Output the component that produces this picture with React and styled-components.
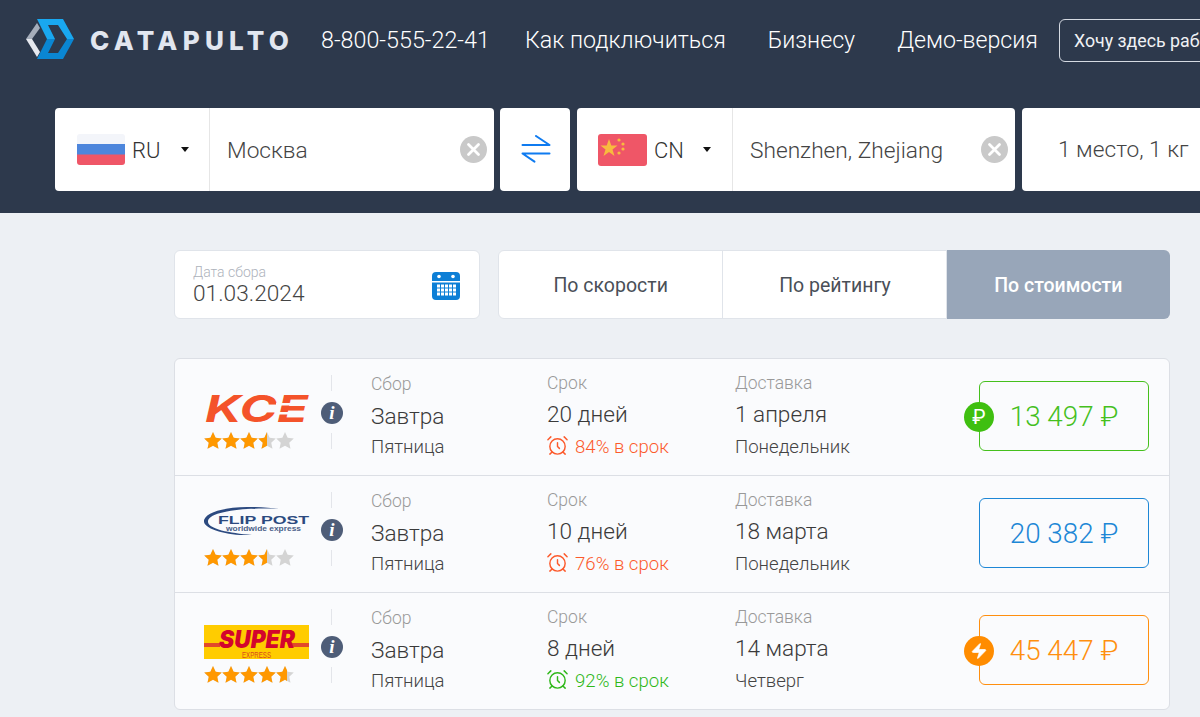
import React from 'react'
import styled, { createGlobalStyle } from 'styled-components'
import { AlarmClock, Zap } from 'lucide-react'

const GlobalStyle = createGlobalStyle`
  html, body {
    margin: 0;
    padding: 0;
    width: 1200px;
    height: 717px;
    overflow: hidden;
    background: #edf0f4;
    font-family: Roboto, "Liberation Sans", sans-serif;
    font-weight: 300;
  }
  * { box-sizing: border-box; }
`

const Page = styled.div`
  width: 1200px;
  height: 717px;
  overflow: hidden;
`
const Header = styled.header`
  height: 213px;
  background: #2d394c;
  padding: 18px 0 0 25px;
`
const TopBar = styled.div`
  display: flex;
  align-items: center;
  height: 44px;
  white-space: nowrap;
`
const Brand = styled.div`
  display: flex;
  align-items: center;
  flex: none;
  gap: 15px;
  width: 296px;
`
const BrandName = styled.span`
  font-family: Inter, sans-serif;
  font-weight: 800;
  font-size: 26px;
  letter-spacing: 5.3px;
  color: #e1e6ef;
`
const Phone = styled.span`
  flex: none;
  font-size: 23.3px;
  color: #fff;
  width: 204px;
`
const NavLink = styled.a`
  flex: none;
  font-size: 23.2px;
  color: #fff;
  margin-right: ${(p) => p.$gap}px;
`
const CtaButton = styled.a`
  display: flex;
  flex: none;
  align-items: center;
  height: 43px;
  padding: 0 14px;
  border: 1px solid #d5dae2;
  border-radius: 6px;
  font-size: 17.8px;
  font-weight: 400;
  color: #f0f2f5;
`
const SearchBar = styled.div`
  display: flex;
  gap: 7px;
  margin: 46px 0 0 30px;
  height: 83px;
`
const Field = styled.div`
  display: flex;
  align-items: center;
  flex: none;
  width: ${(p) => p.$w}px;
  background: #fff;
  border-radius: 4px;
`
const SwapField = styled(Field)`
  justify-content: center;
  margin-left: -1px;
  padding-left: 1px;
`
const CountryPick = styled.div`
  display: flex;
  align-items: center;
  flex: none;
  width: ${(p) => p.$w}px;
  height: 100%;
  padding-left: ${(p) => p.$pad}px;
  border-right: 1px solid #e6e6e6;
  position: relative;
  font-size: 22px;
  color: #333;
`
const Code = styled.span`
  margin: 2px 0 0 7px;
`
const Caret = styled.i`
  position: absolute;
  left: 126px;
  top: 39px;
  border-left: 4px solid transparent;
  border-right: 4px solid transparent;
  border-top: 5px solid #111;
`
const City = styled.div`
  flex: 1;
  padding: 2px 0 0 17px;
  font-size: 22.7px;
  color: #444;
`
const ClearBtn = styled.span`
  display: flex;
  align-items: center;
  justify-content: center;
  width: 27px;
  height: 27px;
  margin-right: 7px;
  border-radius: 50%;
  background: #c9c9c9;
`
const Weight = styled.div`
  padding-left: 36px;
  font-size: 22.7px;
  color: #444;
  white-space: nowrap;
`
const Main = styled.main`
  padding: 37px 30px 0 174px;
`
const Controls = styled.div`
  display: flex;
  gap: 18px;
  height: 69px;
`
const DateBox = styled.div`
  display: flex;
  align-items: center;
  justify-content: space-between;
  width: 306px;
  padding: 2px 19px 0 18px;
  background: #fff;
  border: 1px solid #e0e4ea;
  border-radius: 6px;
`
const DateLabel = styled.div`
  font-size: 14px;
  line-height: 14px;
  color: #adb2bb;
`
const DateValue = styled.div`
  font-size: 22.7px;
  line-height: 26px;
  margin-top: 2px;
  color: #444;
`
const SortTabs = styled.div`
  display: flex;
  flex: 1;
  background: #fff;
  border: 1px solid #e0e4ea;
  border-radius: 6px;
`
const SortTab = styled.div`
  flex: 1;
  display: flex;
  align-items: center;
  justify-content: center;
  padding-top: 2px;
  font-size: 19.5px;
  font-weight: 400;
  color: #4a4f57;
  & + & { border-left: 1px solid #e0e4ea; }
`
const ActiveSortTab = styled(SortTab)`
  margin: -1px;
  font-weight: 500;
  color: #fff;
  background: #98a6b9;
  border-radius: 0 6px 6px 0;
`
const Results = styled.section`
  margin-top: 39px;
  background: #fafbfd;
  border: 1px solid #dcdfe5;
  border-radius: 6px;
`
const Row = styled.article`
  display: flex;
  align-items: center;
  height: 116px;
  & + & {
    height: 117px;
    border-top: 1px solid #dcdfe5;
  }
`
const Carrier = styled.div`
  flex: none;
  width: 157px;
  height: 100%;
  padding: 29px 0 0 29px;
  position: relative;
`
const LogoBox = styled.div`
  height: 42px;
  padding-bottom: ${(p) => p.$nudge || 0}px;
  display: flex;
  align-items: center;
`
const Rule = styled.i`
  position: absolute;
  right: 0;
  top: ${(p) => p.$top}px;
  width: 1px;
  height: 16px;
  background: #e3e5ea;
`
const InfoBadge = styled.span`
  position: absolute;
  left: 146px;
  top: 43px;
  width: 22px;
  height: 22px;
  border-radius: 50%;
  background: #4e5d78;
  color: #fff;
  font-family: "Liberation Serif", serif;
  font-style: italic;
  font-weight: 700;
  font-size: 19px;
  line-height: 22px;
  text-align: center;
`
const Stars = styled.div`
  position: relative;
  width: 90px;
  height: 17px;
  margin-top: 2px;
`
const StarRow = styled.div`
  display: flex;
  width: 90px;
  color: ${(p) => p.$color};
  svg { flex: none; width: 18px; height: 17px; display: block; }
`
const StarFill = styled.div`
  position: absolute;
  left: 0;
  top: 0;
  overflow: hidden;
`
const Col = styled.div`
  flex: none;
  width: ${(p) => p.$w}px;
  height: 100%;
  padding-top: ${(p) => p.$top}px;
`
const Label = styled.div`
  font-size: 17.5px;
  line-height: 22px;
  color: #999;
`
const Value = styled.div`
  font-size: 22.6px;
  line-height: 26px;
  margin-top: ${(p) => p.$m}px;
  color: #3a3a3a;
`
const Sub = styled.div`
  display: flex;
  align-items: center;
  gap: 6px;
  font-size: 18.6px;
  line-height: 22px;
  margin-top: ${(p) => p.$m}px;
  color: ${(p) => p.$color || '#444'};
  svg { margin: -3px 0 0 -1px; }
`
const PriceBox = styled.div`
  position: relative;
  flex: none;
  width: 170px;
  height: 70px;
  margin-top: -2px;
  display: flex;
  align-items: center;
  justify-content: center;
  border: 1px solid ${(p) => p.$color};
  border-radius: 6px;
  font-size: 27.8px;
  color: ${(p) => p.$color};
`
const PriceBadge = styled.span`
  position: absolute;
  left: -16px;
  top: 20px;
  width: 30px;
  height: 30px;
  display: flex;
  align-items: center;
  justify-content: center;
  border-radius: 50%;
  background: ${(p) => p.$color};
  color: #fff;
  font-size: 20px;
  font-weight: 400;
`

const Star = () => (
  <svg viewBox="0.5 0.5 17 16">
    <path fill="currentColor" d="M9 0.5l2.5 5.4 5.8.7-4.3 4 1.2 5.8L9 13.5l-5.2 2.9L5 10.6.7 6.6l5.8-.7z" />
  </svg>
)

const Rating = ({ value }) => (
  <Stars>
    <StarRow $color="#d4d4d4">{[0, 1, 2, 3, 4].map((i) => <Star key={i} />)}</StarRow>
    <StarFill style={{ width: value * 18 }}>
      <StarRow $color="#ff9800">{[0, 1, 2, 3, 4].map((i) => <Star key={i} />)}</StarRow>
    </StarFill>
  </Stars>
)

const BrandMark = () => (
  <svg width="50" height="42" viewBox="0 0 50 42">
    <polygon fill="#a5adba" points="1,20 12,4 15,9 7,20" />
    <polygon fill="#e6e9ef" points="1,20 7,20 15,33 12,38" />
    <polygon fill="#19a8f0" points="12,0 38,0 49,20 42,20 33,6 23,6 30,20 22,20" />
    <polygon fill="#0a86d2" points="22,20 30,20 23,34 33,34 42,20 49,20 38,40 12,40" />
  </svg>
)

const SwapIcon = () => (
  <svg width="30" height="30" viewBox="0 0 30 30" fill="none" stroke="#0f7bf0" strokeWidth="2" strokeLinecap="round" strokeLinejoin="round">
    <path d="M1.5 10h27L15 1" />
    <path d="M28.5 18.5h-27L13.5 26.7" />
  </svg>
)

const ClearIcon = () => (
  <svg width="15" height="15" viewBox="0 0 15 15" stroke="#fff" strokeWidth="2.8" strokeLinecap="round">
    <path d="M2.5 2.5l10 10M12.5 2.5l-10 10" />
  </svg>
)

const FlagRu = () => (
  <svg width="48" height="31" viewBox="0 0 48 31" style={{ borderRadius: 3 }}>
    <rect width="48" height="11" fill="#f3f5fa" />
    <rect y="10" width="48" height="11" fill="#4d86dc" />
    <rect y="20.5" width="48" height="10.5" fill="#ef5667" />
  </svg>
)

const FlagCn = () => (
  <svg width="49" height="32" viewBox="0 0 49 32" style={{ borderRadius: 3 }}>
    <rect width="49" height="32" fill="#ef5667" />
    <polygon fill="#f8bb3e" points="11,5 13.3,11.5 19.5,11.5 14.5,15.5 16.5,22 11,18 5.5,22 7.5,15.5 2.5,11.5 8.7,11.5" />
    <circle cx="21" cy="6" r="1.6" fill="#f8bb3e" />
    <circle cx="25" cy="10" r="1.6" fill="#f8bb3e" />
    <circle cx="25" cy="15" r="1.6" fill="#f8bb3e" />
    <circle cx="21" cy="19" r="1.6" fill="#f8bb3e" />
  </svg>
)

const CalendarIcon = () => (
  <svg width="28" height="28" viewBox="0 0 28 28">
    <rect width="28" height="28" rx="4" fill="#0d7fd6" />
    <rect y="9" width="28" height="1.5" fill="#fff" />
    <circle cx="7" cy="4.5" r="1.8" fill="#fff" />
    <circle cx="21" cy="4.5" r="1.8" fill="#fff" />
    {[12.5, 16.5, 20.5].map((y) =>
      [5, 9, 13, 17, 21].map((x) => <rect key={x + '-' + y} x={x} y={y} width="3" height="3" fill="#fff" />)
    )}
  </svg>
)

const KceLogo = () => (
  <svg width="110" height="32" viewBox="0 0 110 32">
    <text x="1" y="29" fontFamily="Inter, sans-serif" fontWeight="700" fontStyle="italic" fontSize="37" fill="#f4532a" textLength="103" lengthAdjust="spacingAndGlyphs">KCE</text>
    <rect x="72" y="10" width="36" height="2.5" fill="#fafbfd" />
    <rect x="72" y="19" width="36" height="2.5" fill="#fafbfd" />
  </svg>
)

const FlipLogo = () => (
  <svg width="106" height="32" viewBox="0 0 106 32">
    <path fill="#2c4a80" d="M75 2C50-2 5-1 0 13c-2 9 25 16 48 15C25 26 3 22 4 14 6 4 45 0 75 2z" />
    <text x="14" y="17" fontFamily="'Liberation Sans', sans-serif" fontWeight="700" fontSize="11.5" fill="#2c4a80" textLength="91" lengthAdjust="spacingAndGlyphs">FLIP POST</text>
    <text x="22" y="24" fontFamily="'Liberation Sans', sans-serif" fontWeight="700" fontSize="8" fill="#4a5f88" textLength="75" lengthAdjust="spacingAndGlyphs">worldwide express</text>
  </svg>
)

const SuperLogo = () => (
  <svg width="105" height="34" viewBox="0 0 105 34">
    <rect width="105" height="34" fill="#ffcc00" />
    <rect y="18" width="16" height="4" fill="#e2492a" />
    <rect x="88" y="18" width="17" height="4" fill="#e2492a" />
    <text x="15" y="23" fontFamily="Inter, sans-serif" fontWeight="900" fontStyle="italic" fontSize="24" fill="#d3052d" textLength="76" lengthAdjust="spacingAndGlyphs">SUPER</text>
    <text x="38" y="33" fontFamily="'Liberation Sans', sans-serif" fontSize="9" fill="#d84b1c" textLength="29" lengthAdjust="spacingAndGlyphs">EXPRESS</text>
  </svg>
)

const rows = [
  { logo: <KceLogo />, nudge: 0, rating: 3.5, term: '20 дней', ontime: '84% в срок', onColor: '#fc5a2c', date: '1 апреля', day: 'Понедельник', price: '13 497 ₽', color: '#45c01d', badge: '₽', badgeColor: '#3fbf10' },
  { logo: <FlipLogo />, nudge: 6, rating: 3.5, term: '10 дней', ontime: '76% в срок', onColor: '#fc5a2c', date: '18 марта', day: 'Понедельник', price: '20 382 ₽', color: '#1d87d6' },
  { logo: <SuperLogo />, nudge: 2, rating: 4.6, term: '8 дней', ontime: '92% в срок', onColor: '#2fb81a', date: '14 марта', day: 'Четверг', price: '45 447 ₽', color: '#ff8f0f', badge: 'zap', badgeColor: '#ff8c00' },
]

const App = () => {
  return (
    <Page>
      <GlobalStyle />
      <Header>
        <TopBar>
          <Brand>
            <BrandMark />
            <BrandName>CATAPULTO</BrandName>
          </Brand>
          <Phone>8-800-555-22-41</Phone>
          <NavLink $gap={42}>Как подключиться</NavLink>
          <NavLink $gap={42}>Бизнесу</NavLink>
          <NavLink $gap={21}>Демо-версия</NavLink>
          <CtaButton>Хочу здесь работать</CtaButton>
        </TopBar>
        <SearchBar>
          <Field $w={439}>
            <CountryPick $w={155} $pad={22}>
              <FlagRu />
              <Code>RU</Code>
              <Caret />
            </CountryPick>
            <City>Москва</City>
            <ClearBtn><ClearIcon /></ClearBtn>
          </Field>
          <SwapField $w={70}><SwapIcon /></SwapField>
          <Field $w={438}>
            <CountryPick $w={156} $pad={21}>
              <FlagCn />
              <Code>CN</Code>
              <Caret />
            </CountryPick>
            <City>Shenzhen, Zhejiang</City>
            <ClearBtn><ClearIcon /></ClearBtn>
          </Field>
          <Field $w={300}>
            <Weight>1 место, 1 кг</Weight>
          </Field>
        </SearchBar>
      </Header>
      <Main>
        <Controls>
          <DateBox>
            <div>
              <DateLabel>Дата сбора</DateLabel>
              <DateValue>01.03.2024</DateValue>
            </div>
            <CalendarIcon />
          </DateBox>
          <SortTabs>
            <SortTab>По скорости</SortTab>
            <SortTab>По рейтингу</SortTab>
            <ActiveSortTab>По стоимости</ActiveSortTab>
          </SortTabs>
        </Controls>
        <Results>
          {rows.map((r) => (
            <Row key={r.price}>
              <Carrier>
                <LogoBox $nudge={r.nudge}>{r.logo}</LogoBox>
                <Rating value={r.rating} />
                <Rule $top={16} />
                <Rule $top={74} />
                <InfoBadge>i</InfoBadge>
              </Carrier>
              <Col $w={39} />
              <Col $w={176} $top={14}>
                <Label>Сбор</Label>
                <Value $m={9}>Завтра</Value>
                <Sub $m={6}>Пятница</Sub>
              </Col>
              <Col $w={188} $top={13}>
                <Label>Срок</Label>
                <Value $m={8}>{r.term}</Value>
                <Sub $m={8} $color={r.onColor}><AlarmClock size={23} strokeWidth={1.5} />{r.ontime}</Sub>
              </Col>
              <Col $w={244} $top={13}>
                <Label>Доставка</Label>
                <Value $m={8}>{r.date}</Value>
                <Sub $m={8}>{r.day}</Sub>
              </Col>
              <PriceBox $color={r.color}>
                {r.badge && (
                  <PriceBadge $color={r.badgeColor}>
                    {r.badge === 'zap' ? <Zap size={18} fill="#fff" strokeWidth={1} /> : r.badge}
                  </PriceBadge>
                )}
                {r.price}
              </PriceBox>
            </Row>
          ))}
        </Results>
      </Main>
    </Page>
  )
}

export default App
